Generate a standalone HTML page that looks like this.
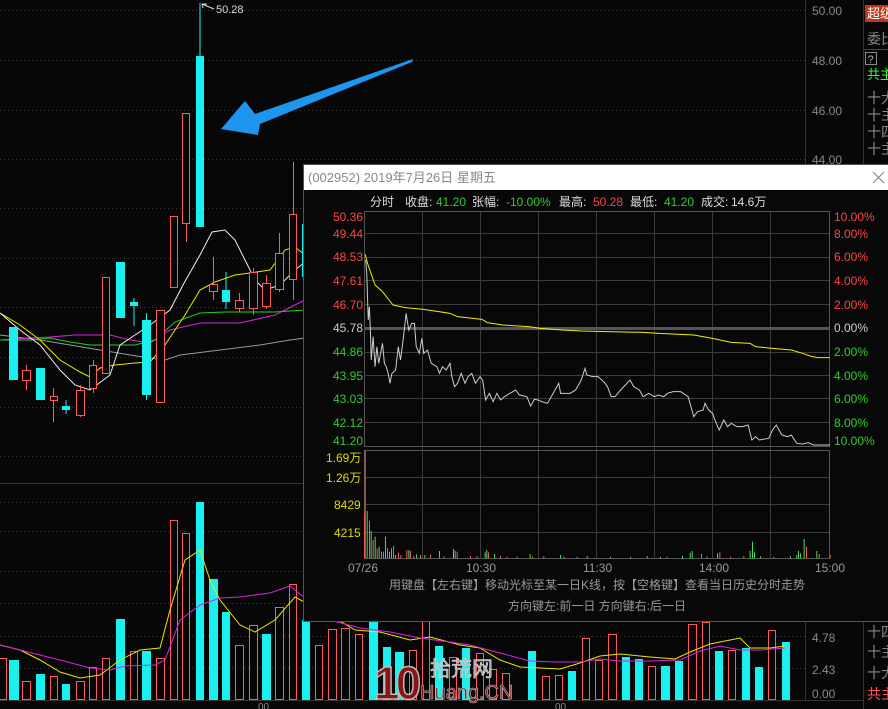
<!DOCTYPE html>
<html><head><meta charset="utf-8"><style>
html,body{margin:0;padding:0;background:#070707;}
svg{display:block;font-family:"Liberation Sans","Noto Sans CJK SC",sans-serif;}
</style></head><body>
<svg width="888" height="709" viewBox="0 0 888 709" xmlns="http://www.w3.org/2000/svg">
<rect width="888" height="709" fill="#070707"/>
<g stroke="#3a3a3a" stroke-dasharray="1,3" stroke-width="1">
<line x1="0" y1="10.5" x2="805" y2="10.5"/><line x1="0" y1="60.5" x2="805" y2="60.5"/>
<line x1="0" y1="110.5" x2="805" y2="110.5"/><line x1="0" y1="159.5" x2="805" y2="159.5"/>
<line x1="0" y1="208.5" x2="805" y2="208.5"/><line x1="0" y1="258.5" x2="805" y2="258.5"/>
<line x1="0" y1="307.5" x2="805" y2="307.5"/><line x1="0" y1="357.5" x2="805" y2="357.5"/>
<line x1="0" y1="407.5" x2="805" y2="407.5"/><line x1="0" y1="456.5" x2="805" y2="456.5"/>
<line x1="0" y1="502.5" x2="805" y2="502.5"/><line x1="0" y1="531.5" x2="805" y2="531.5"/>
<line x1="0" y1="571.5" x2="805" y2="571.5"/><line x1="0" y1="603.5" x2="805" y2="603.5"/>
<line x1="0" y1="636.5" x2="805" y2="636.5"/><line x1="0" y1="668.5" x2="805" y2="668.5"/>
</g>
<line x1="0" y1="483.5" x2="805" y2="483.5" stroke="#333"/>
<line x1="805.5" y1="0" x2="805.5" y2="700" stroke="#333"/>
<line x1="863.5" y1="0" x2="863.5" y2="709" stroke="#333"/>
<line x1="0" y1="700.5" x2="863" y2="700.5" stroke="#333"/>
<g fill="#8a8a8a" font-size="12">
<text x="812" y="15">50.00</text><text x="812" y="65">48.00</text>
<text x="812" y="115">46.00</text><text x="812" y="164">44.00</text>
<text x="812" y="642">4.78</text><text x="812" y="674">2.43</text><text x="812" y="698">0.00</text>
<text x="258" y="710" font-size="10">00</text><text x="555" y="710" font-size="10">00</text>
</g>
<rect x="865" y="5" width="23" height="17" fill="#c0341a"/>
<text x="867" y="18" fill="#fff" font-size="13">超级</text>
<text x="867" y="44" fill="#888" font-size="14">委比</text>
<line x1="864" y1="49.5" x2="888" y2="49.5" stroke="#444"/>
<rect x="865.5" y="52.5" width="11" height="12" fill="none" stroke="#888"/>
<text x="867.5" y="63" fill="#aaa" font-size="11">?</text>
<text x="867" y="79" fill="#3f3" font-size="13">共主</text>
<g fill="#888" font-size="14"><text x="867" y="103">十大</text><text x="867" y="120">十主</text><text x="867" y="137">十四</text><text x="867" y="154">十主</text>
<text x="867" y="637">十四</text><text x="867" y="657">十主</text><text x="867" y="678">十大</text></g>
<text x="867" y="699" fill="#f55" font-size="14">共主</text>

<g fill="none" stroke-width="1">
<polyline stroke="#999" points="0,335 40,340 70,345 100,350 130,355 150,358 165,360 180,355 220,350 260,345 290,340 305,338"/>
<polyline stroke="#e020e0" points="0,340 30,338 50,337 75,335 110,335 130,340 150,343 170,330 200,323 240,323 275,315 295,305 305,300"/>
<polyline stroke="#20d020" points="0,340 30,340 50,338 70,342 90,345 110,345 135,345 155,340 175,322 200,313 225,312 255,312 275,312 305,310"/>
<polyline stroke="#e8e800" points="0,313 20,325 40,340 60,360 80,372 90,377 100,368 115,365 135,363 150,362 165,345 185,315 200,290 215,282 235,275 250,273 270,270 285,250 295,247 305,255"/>
<polyline stroke="#eee" points="0,313 20,330 40,345 60,370 75,385 90,390 110,375 120,345 135,335 150,325 170,310 183,285 200,255 212,232 225,230 235,240 245,260 255,280 265,290 280,285 295,270 305,262"/>
</g>
<g stroke="#ff5a5a" fill="#070707" stroke-width="1">
<line x1="26.5" y1="365" x2="26.5" y2="390"/><rect x="22.5" y="370.5" width="8" height="10"/>
<line x1="53.5" y1="388" x2="53.5" y2="422"/><rect x="50.5" y="396.5" width="7" height="4"/>
<line x1="80.5" y1="385" x2="80.5" y2="417"/><rect x="76.5" y="390.5" width="8" height="25"/>
<line x1="93.5" y1="360" x2="93.5" y2="393"/><rect x="89.5" y="365.5" width="7" height="23"/>
<rect x="102.5" y="277.5" width="7" height="96"/>
<rect x="156.5" y="310.5" width="8" height="92"/>
<rect x="170.5" y="216.5" width="7" height="71"/>
<line x1="186.5" y1="223" x2="186.5" y2="242"/><rect x="182.5" y="113.5" width="7" height="110"/>
<line x1="213.5" y1="257" x2="213.5" y2="300"/><rect x="209.5" y="284.5" width="8" height="7"/>
<line x1="239.5" y1="293" x2="239.5" y2="312"/><rect x="235.5" y="300.5" width="8" height="8"/>
<line x1="253.5" y1="268" x2="253.5" y2="315"/><rect x="249.5" y="272.5" width="8" height="36"/>
<line x1="266.5" y1="275" x2="266.5" y2="309"/><rect x="262.5" y="283.5" width="8" height="23"/>
<line x1="279.5" y1="233" x2="279.5" y2="292"/><rect x="275.5" y="253.5" width="8" height="36"/>
<line x1="293.5" y1="162" x2="293.5" y2="300"/><rect x="289.5" y="214.5" width="7" height="65"/>
</g>
<g fill="#19f0f0">
<rect x="9" y="327" width="9" height="53"/>
<rect x="36" y="368" width="9" height="32"/>
<rect x="62" y="406" width="8" height="4"/><rect x="65.5" y="400" width="1" height="14"/>
<rect x="116" y="262" width="9" height="56"/>
<rect x="130" y="302" width="8" height="4"/><rect x="133.5" y="298" width="1" height="28"/>
<rect x="142" y="320" width="9" height="75"/><rect x="146" y="313" width="1" height="87"/>
<rect x="196" y="56" width="8" height="171"/><rect x="199.5" y="3" width="1" height="53"/>
<rect x="222" y="290" width="8" height="12"/><rect x="225.5" y="272" width="1" height="37"/>
<rect x="302" y="224" width="3" height="53"/>
</g>
<path d="M202 4 L214 9" stroke="#ddd" fill="none"/><path d="M202 4 L207 4 M202 4 L203 8" stroke="#ddd"/>
<text x="216" y="13" fill="#ddd" font-size="11">50.28</text>
<polygon points="413,59 255,114 245,101 221,129 258,135 260,124 412,62" fill="#1e96f0"/>

<g stroke="#ff5a5a" fill="#070707">
<rect x="-2.5" y="658.5" width="9" height="41"/><rect x="22.5" y="681.5" width="8" height="18"/>
<rect x="50.5" y="676.5" width="7" height="23"/><rect x="76.5" y="681.5" width="8" height="18"/>
<rect x="89.5" y="667.5" width="7" height="32"/><rect x="102.5" y="658.5" width="7" height="41"/>
<rect x="130.5" y="651.5" width="7" height="48"/><rect x="156.5" y="658.5" width="8" height="41"/>
<rect x="170.5" y="520.5" width="7" height="179"/><rect x="182.5" y="533.5" width="7" height="166"/>
<rect x="235.5" y="645.5" width="8" height="54"/><rect x="249.5" y="625.5" width="8" height="74"/>
<rect x="275.5" y="607.5" width="8" height="92"/><rect x="289.5" y="584.5" width="7" height="115"/>
<rect x="315.5" y="645.5" width="7" height="54"/><rect x="328.5" y="629.5" width="8" height="70"/>
<rect x="341.5" y="628.5" width="8" height="71"/><rect x="355.5" y="634.5" width="7" height="65"/>
<rect x="409.5" y="650.5" width="7" height="49"/><rect x="422.5" y="620.5" width="7" height="79"/>
<rect x="449.5" y="657.5" width="7" height="42"/><rect x="476.5" y="653.5" width="7" height="46"/>
<rect x="489.5" y="669.5" width="7" height="30"/><rect x="502.5" y="673.5" width="7" height="26"/>
<rect x="542.5" y="676.5" width="7" height="23"/><rect x="555.5" y="675.5" width="7" height="24"/>
<rect x="582.5" y="638.5" width="7" height="61"/><rect x="595.5" y="660.5" width="7" height="39"/>
<rect x="608.5" y="634.5" width="8" height="65"/><rect x="648.5" y="666.5" width="7" height="33"/>
<rect x="688.5" y="624.5" width="8" height="75"/><rect x="702.5" y="622.5" width="7" height="77"/>
<rect x="728.5" y="650.5" width="7" height="49"/><rect x="768.5" y="630.5" width="7" height="69"/>
</g>
<g fill="#19f0f0">
<rect x="9" y="660" width="10" height="40"/><rect x="36" y="674" width="9" height="26"/>
<rect x="62" y="684" width="8" height="16"/><rect x="116" y="619" width="9" height="81"/>
<rect x="142" y="651" width="9" height="49"/><rect x="196" y="502" width="8" height="198"/>
<rect x="209" y="579" width="9" height="121"/><rect x="222" y="612" width="8" height="88"/>
<rect x="262" y="634" width="9" height="66"/><rect x="302" y="620" width="8" height="80"/>
<rect x="369" y="622" width="9" height="78"/><rect x="383" y="647" width="8" height="53"/>
<rect x="395" y="652" width="9" height="48"/><rect x="435" y="646" width="8" height="54"/>
<rect x="462" y="648" width="8" height="52"/><rect x="528" y="651" width="8" height="49"/>
<rect x="568" y="671" width="8" height="29"/><rect x="622" y="657" width="8" height="43"/>
<rect x="635" y="659" width="8" height="41"/><rect x="661" y="666" width="9" height="34"/>
<rect x="675" y="661" width="8" height="39"/><rect x="715" y="651" width="8" height="49"/>
<rect x="742" y="648" width="8" height="52"/><rect x="755" y="667" width="8" height="33"/>
<rect x="782" y="642" width="8" height="58"/>
</g>
<g fill="none">
<polyline stroke="#e8e800" points="0,645 20,650 40,660 60,672 80,678 100,675 120,660 140,650 160,648 170,610 185,560 200,550 210,580 220,600 240,625 255,632 275,620 295,597 310,605 330,615 355,630 380,632 410,640 430,637 460,645 480,648 500,660 520,667 540,668 560,669 580,663 600,656 620,654 650,657 675,659 690,652 710,644 740,638 750,648 770,648 785,646"/>
<polyline stroke="#e020e0" points="0,645 20,650 60,660 90,668 110,670 125,666 155,665 165,660 180,620 200,605 220,598 240,597 270,593 290,586 305,598 330,620 360,628 390,632 420,638 450,642 470,645 500,653 530,661 555,662 580,662 600,659 620,661 650,661 680,660 700,651 720,646 740,650 760,650 785,648"/>
</g>
<text x="374" y="699" font-size="46" font-weight="bold" fill="#8a1515" stroke="#bbb" stroke-width="1.5" letter-spacing="-4">10</text>
<text x="430" y="676" font-size="21" fill="#aaa" stroke="#ddd" stroke-width="0.6">拾荒网</text>
<text x="420" y="699" font-size="20" fill="#8a1515" stroke="#bbb" stroke-width="0.6">Huang.CN</text>

<rect x="303" y="164" width="585" height="458" fill="#080808"/>
<rect x="303.5" y="164.5" width="590" height="457" fill="none" stroke="#555"/>
<rect x="304" y="165" width="584" height="25" fill="#fff"/>
<text x="308" y="182" fill="#888" font-size="13">(002952) 2019年7月26日 星期五</text>
<path d="M873 172 L884 183 M884 172 L873 183" stroke="#888" stroke-width="1.2"/>
<g font-size="12">
<text x="370" y="206" fill="#ddd">分时</text>
<text x="405" y="206" fill="#ddd">收盘:</text><text x="436" y="206" fill="#3c3">41.20</text>
<text x="472" y="206" fill="#ddd">张幅:</text><text x="506" y="206" fill="#3c3">-10.00%</text>
<text x="559" y="206" fill="#ddd">最高:</text><text x="593" y="206" fill="#f44">50.28</text>
<text x="630" y="206" fill="#ddd">最低:</text><text x="664" y="206" fill="#3c3">41.20</text>
<text x="701" y="206" fill="#ddd">成交:</text><text x="731" y="206" fill="#ddd">14.6万</text>
</g>
<g stroke="#3c3c3c">
<line x1="364" y1="233.5" x2="830" y2="233.5"/><line x1="364" y1="257.5" x2="830" y2="257.5"/>
<line x1="364" y1="280.5" x2="830" y2="280.5"/><line x1="364" y1="304.5" x2="830" y2="304.5"/>
<line x1="364" y1="352.5" x2="830" y2="352.5"/><line x1="364" y1="375.5" x2="830" y2="375.5"/>
<line x1="364" y1="398.5" x2="830" y2="398.5"/><line x1="364" y1="422.5" x2="830" y2="422.5"/>
<line x1="364" y1="477.5" x2="830" y2="477.5"/><line x1="364" y1="504.5" x2="830" y2="504.5"/>
<line x1="364" y1="532.5" x2="830" y2="532.5"/>
<line x1="422.5" y1="211" x2="422.5" y2="558"/><line x1="480.5" y1="211" x2="480.5" y2="558"/>
<line x1="538.5" y1="211" x2="538.5" y2="558"/><line x1="596.5" y1="211" x2="596.5" y2="558"/>
<line x1="654.5" y1="211" x2="654.5" y2="558"/><line x1="712.5" y1="211" x2="712.5" y2="558"/>
<line x1="770.5" y1="211" x2="770.5" y2="558"/>
</g>
<rect x="364.5" y="211.5" width="465" height="235" fill="none" stroke="#555"/>
<rect x="364.5" y="450.5" width="465" height="108" fill="none" stroke="#555"/>
<line x1="364" y1="328.5" x2="830" y2="328.5" stroke="#555" stroke-width="3"/>
<g font-size="12">
<text x="333" y="221" fill="#f44">50.36</text><text x="333" y="238" fill="#f44">49.44</text>
<text x="333" y="261" fill="#f44">48.53</text><text x="333" y="285" fill="#f44">47.61</text>
<text x="333" y="309" fill="#f44">46.70</text><text x="333" y="332" fill="#ccc">45.78</text>
<text x="333" y="356" fill="#3c3">44.86</text><text x="333" y="380" fill="#3c3">43.95</text>
<text x="333" y="403" fill="#3c3">43.03</text><text x="333" y="427" fill="#3c3">42.12</text>
<text x="333" y="445" fill="#3c3">41.20</text>
<text x="834" y="221" fill="#f44">10.00%</text><text x="834" y="238" fill="#f44">8.00%</text>
<text x="834" y="261" fill="#f44">6.00%</text><text x="834" y="285" fill="#f44">4.00%</text>
<text x="834" y="309" fill="#f44">2.00%</text><text x="834" y="332" fill="#ccc">0.00%</text>
<text x="834" y="356" fill="#3c3">2.00%</text><text x="834" y="380" fill="#3c3">4.00%</text>
<text x="834" y="403" fill="#3c3">6.00%</text><text x="834" y="427" fill="#3c3">8.00%</text>
<text x="834" y="445" fill="#3c3">10.00%</text>
<text x="326" y="462" fill="#dd0">1.69万</text><text x="326" y="482" fill="#dd0">1.26万</text>
<text x="334" y="509" fill="#dd0">8429</text><text x="334" y="537" fill="#dd0">4215</text>
<text x="348" y="572" fill="#999">07/26</text><text x="466" y="572" fill="#999">10:30</text>
<text x="583" y="572" fill="#999">11:30</text><text x="699" y="572" fill="#999">14:00</text>
<text x="815" y="572" fill="#999">15:00</text>
<text x="597" y="589" fill="#999" text-anchor="middle">用键盘【左右键】移动光标至某一日K线，按【空格键】查看当日历史分时走势</text>
<text x="597" y="610" fill="#999" text-anchor="middle">方向键左:前一日  方向键右:后一日</text>
</g>
<g transform="translate(300,160) scale(0.375,0.33333)" fill="none">
<polyline vector-effect="non-scaling-stroke" stroke="#ccc" stroke-width="1" points="175,300 178,340 182,480 185,440 188,520 190,600 195,530 200,620 205,560 210,610 215,580 220,550 225,610 230,620 235,640 240,670 245,640 255,630 262,560 268,600 275,540 283,460 290,510 298,490 305,490 310,560 318,580 325,535 330,580 340,570 350,610 365,620 372,640 380,620 390,630 400,610 405,650 412,680 420,670 430,640 440,670 448,650 458,640 468,670 480,650 487,660 495,720 505,700 515,725 525,700 535,720 545,710 560,700 575,690 585,705 605,710 615,738 625,718 635,720 645,725 660,730 675,700 690,670 695,700 720,700 735,690 750,660 760,625 765,645 780,650 795,650 810,665 820,680 830,710 840,710 855,690 880,660 890,680 905,690 915,710 930,700 945,710 955,705 970,710 980,700 995,695 1015,695 1035,710 1050,770 1060,755 1075,750 1080,730 1090,750 1100,760 1110,790 1118,810 1130,780 1140,800 1150,790 1165,800 1180,800 1195,795 1205,840 1215,830 1225,840 1250,835 1260,810 1270,795 1285,825 1300,830 1310,825 1325,850 1340,852 1355,848 1370,855 1413,855"/>
<polyline vector-effect="non-scaling-stroke" stroke="#f0f000" stroke-width="1" points="174,283 180,310 200,375 220,395 248,435 280,443 330,448 370,455 400,460 420,470 485,478 500,488 540,495 610,500 640,505 700,510 750,513 820,515 915,517 970,521 1050,525 1100,535 1150,547 1200,550 1215,560 1260,565 1310,570 1340,580 1360,588 1380,593 1413,593"/>
</g>
<g transform="translate(330,445) scale(0.33333)">
<g fill="#ff5a5a">
<rect x="102" y="205" width="4" height="135"/><rect x="104" y="15" width="3" height="325"/>
<rect x="117" y="228" width="3" height="112"/><rect x="128" y="285" width="3" height="55"/>
<rect x="140" y="310" width="3" height="30"/><rect x="153" y="320" width="3" height="20"/>
<rect x="159" y="320" width="3" height="20"/><rect x="171" y="310" width="3" height="30"/>
<rect x="189" y="302" width="3" height="38"/><rect x="204" y="323" width="3" height="17"/>
<rect x="211" y="330" width="3" height="10"/><rect x="229" y="315" width="3" height="25"/>
<rect x="240" y="318" width="3" height="22"/><rect x="270" y="330" width="3" height="10"/>
<rect x="300" y="330" width="3" height="10"/><rect x="380" y="320" width="3" height="20"/>
<rect x="420" y="333" width="3" height="7"/><rect x="474" y="322" width="3" height="18"/>
<rect x="510" y="333" width="3" height="7"/><rect x="606" y="335" width="3" height="5"/>
<rect x="700" y="335" width="3" height="5"/><rect x="900" y="335" width="3" height="5"/>
<rect x="1113" y="327" width="3" height="13"/><rect x="1168" y="322" width="3" height="18"/>
<rect x="1240" y="333" width="3" height="7"/><rect x="1428" y="305" width="3" height="35"/>
<rect x="1466" y="327" width="3" height="13"/><rect x="1499" y="330" width="3" height="10"/>
<rect x="250" y="333" width="3" height="7"/><rect x="340" y="334" width="3" height="6"/>
<rect x="530" y="335" width="3" height="5"/><rect x="740" y="335" width="3" height="5"/>
<rect x="1010" y="335" width="3" height="5"/><rect x="1200" y="335" width="3" height="5"/>
<rect x="1330" y="335" width="3" height="5"/>
</g>
<g fill="#3ce05a">
<rect x="110" y="198" width="3" height="142"/><rect x="122" y="258" width="3" height="82"/>
<rect x="134" y="275" width="3" height="65"/><rect x="146" y="305" width="3" height="35"/>
<rect x="165" y="275" width="3" height="65"/><rect x="177" y="320" width="3" height="20"/>
<rect x="183" y="310" width="3" height="30"/><rect x="195" y="330" width="3" height="10"/>
<rect x="235" y="315" width="3" height="25"/><rect x="258" y="328" width="3" height="12"/>
<rect x="283" y="330" width="3" height="10"/><rect x="327" y="318" width="3" height="22"/>
<rect x="369" y="312" width="3" height="28"/><rect x="374" y="318" width="3" height="22"/>
<rect x="464" y="322" width="3" height="18"/><rect x="469" y="315" width="3" height="25"/>
<rect x="492" y="327" width="3" height="13"/><rect x="599" y="327" width="3" height="13"/>
<rect x="690" y="330" width="3" height="10"/><rect x="770" y="333" width="3" height="7"/>
<rect x="950" y="333" width="3" height="7"/><rect x="1056" y="333" width="3" height="7"/>
<rect x="1079" y="323" width="3" height="17"/><rect x="1085" y="318" width="3" height="22"/>
<rect x="1161" y="325" width="3" height="15"/><rect x="1259" y="318" width="3" height="22"/>
<rect x="1266" y="290" width="3" height="50"/><rect x="1272" y="322" width="3" height="18"/>
<rect x="1399" y="330" width="3" height="10"/><rect x="1404" y="318" width="3" height="22"/>
<rect x="1410" y="325" width="3" height="15"/><rect x="1421" y="282" width="3" height="58"/>
<rect x="1459" y="318" width="3" height="22"/>
<rect x="440" y="334" width="3" height="6"/><rect x="560" y="335" width="3" height="5"/>
<rect x="640" y="334" width="3" height="6"/><rect x="840" y="335" width="3" height="5"/>
<rect x="990" y="335" width="3" height="5"/><rect x="1130" y="335" width="3" height="5"/>
<rect x="1290" y="334" width="3" height="6"/><rect x="1380" y="334" width="3" height="6"/>
</g>
</g>
</svg>
</body></html>
